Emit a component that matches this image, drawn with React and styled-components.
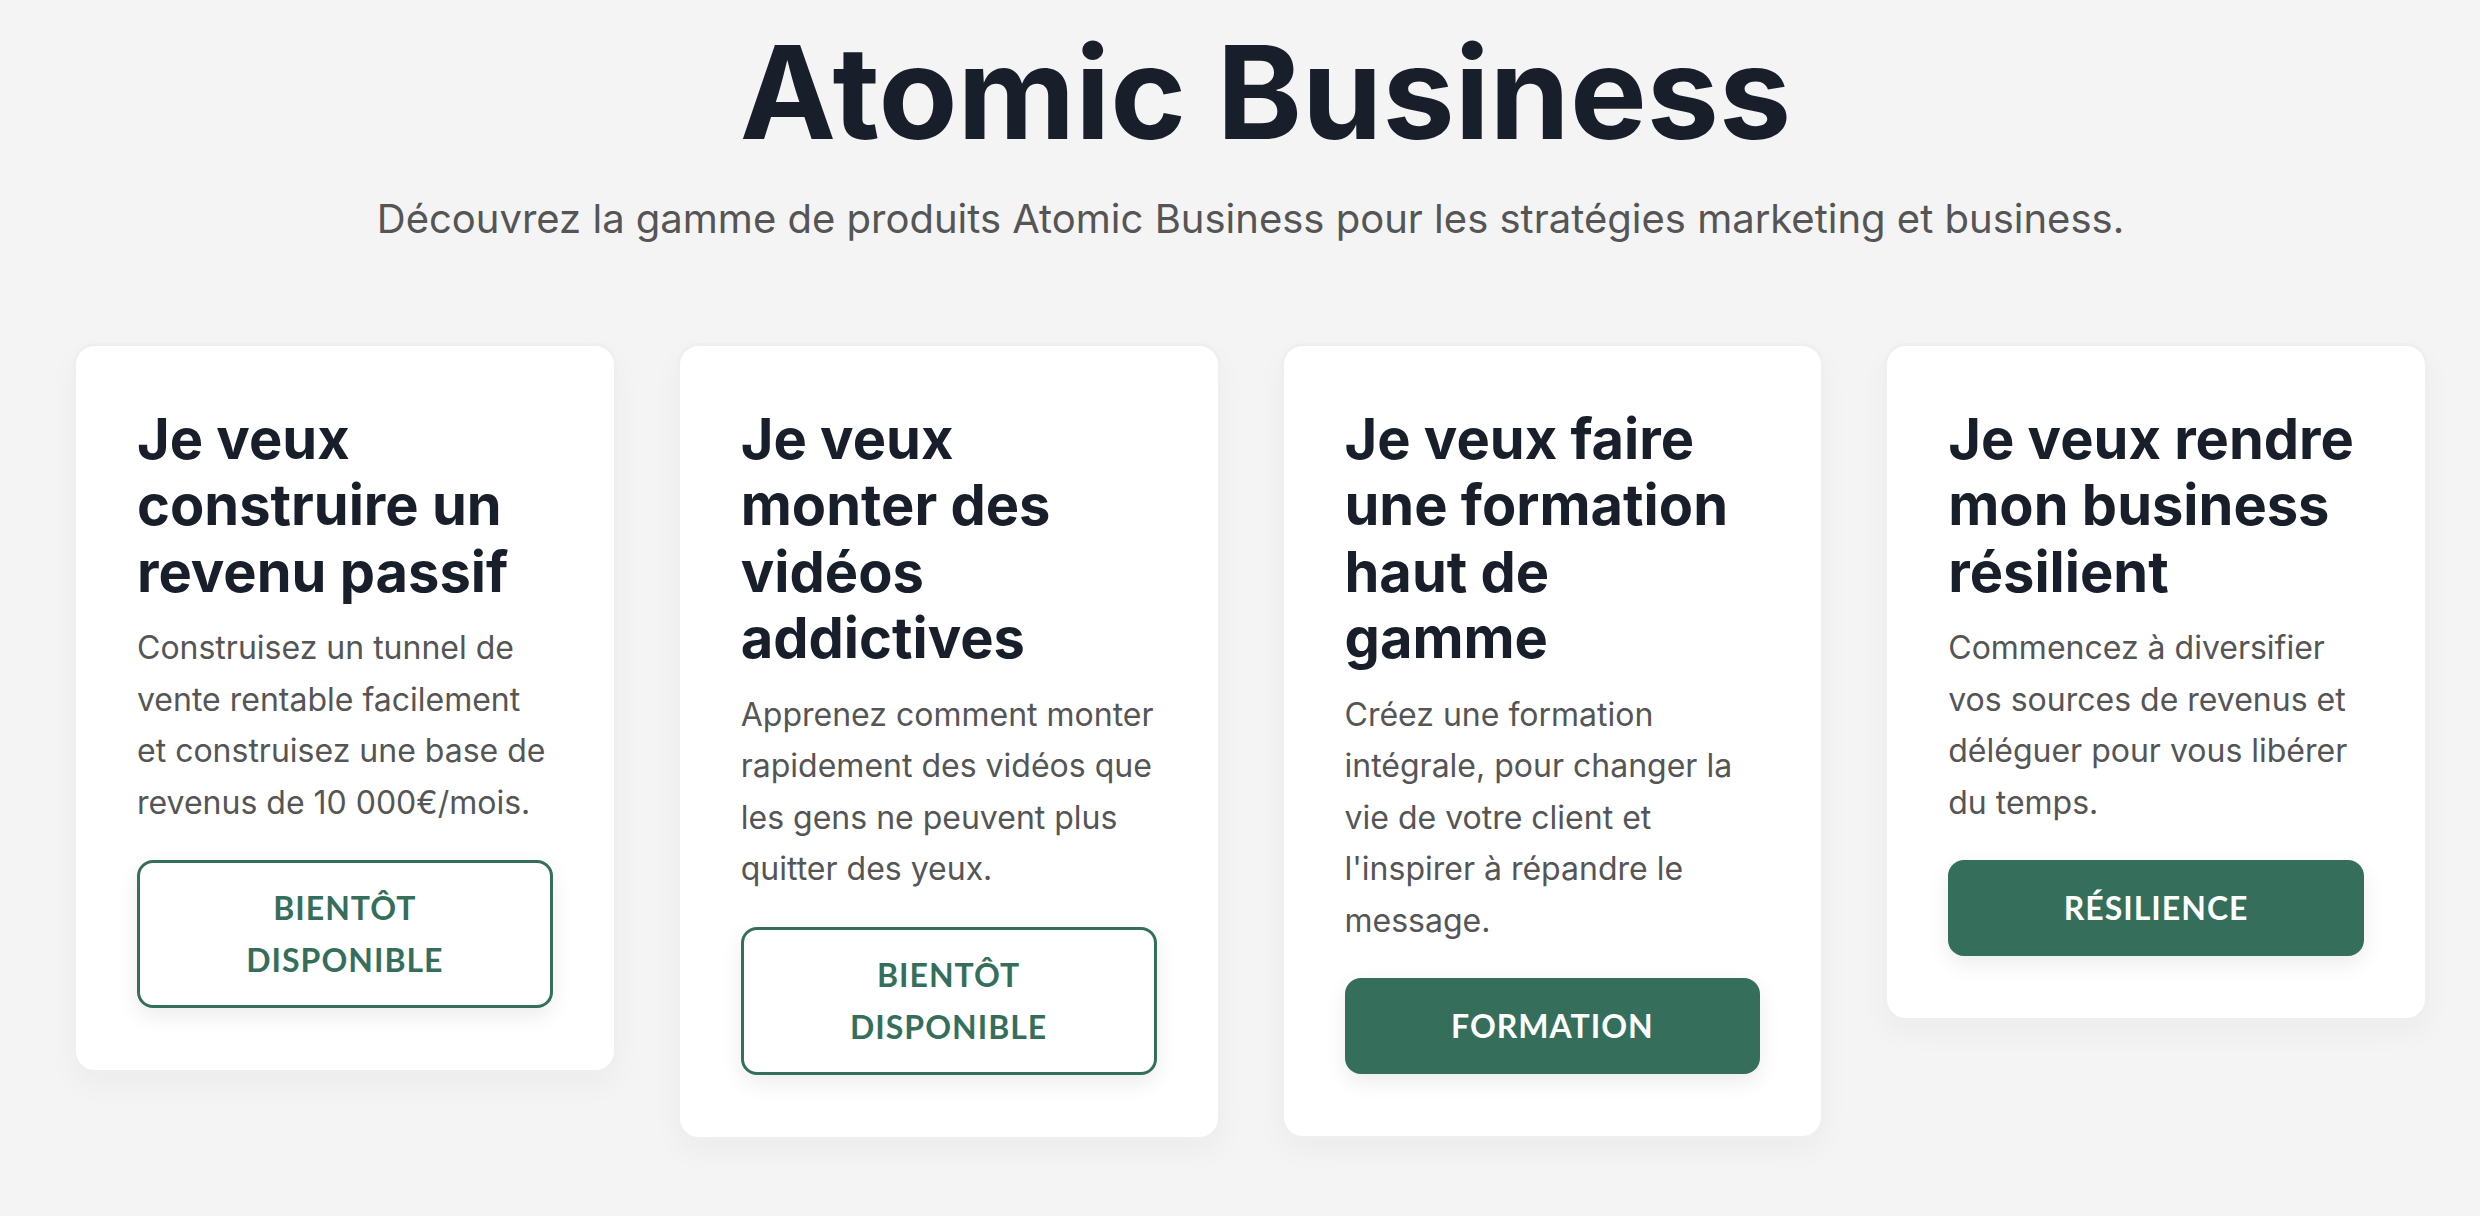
import React from 'react'
import styled, { createGlobalStyle } from 'styled-components'

const GlobalStyle = createGlobalStyle`
    html, body {
        margin: 0;
        padding: 0;
        background: #f4f4f4;
    }
    body {
        font-family: Inter, "Noto Sans", sans-serif;
    }
`

const Page = styled.main`
    padding: 16px 0 60px 21px;
`

const Header = styled.header`
    text-align: center;
`

const Title = styled.h1`
    margin: 0;
    padding-left: 30px;
    font-size: 129px;
    line-height: 152px;
    font-weight: 700;
    color: #181f2a;
`

const Subtitle = styled.p`
    margin: 22px 0 0;
    font-size: 40px;
    line-height: 57px;
    color: #555555;
`

const CardGrid = styled.section`
    display: grid;
    grid-template-columns: repeat(4, 1fr);
    gap: 60px;
    align-items: start;
    margin-top: 96px;
    padding: 0 52px;
`

const Card = styled.article`
    background: #ffffff;
    border: 3px solid #efefef;
    border-radius: 22px;
    padding: 60px 61px 62px;
    box-shadow: 0 12px 30px rgba(0, 0, 0, 0.035);
`

const CardTitle = styled.h2`
    margin: 0 0 17px;
    font-size: 56px;
    line-height: 66.4px;
    font-weight: 700;
    color: #181f2a;
`

const CardText = styled.p`
    margin: 0 0 32px;
    font-size: 32px;
    line-height: 51.5px;
    color: #555555;
`

const Button = styled.a`
    display: block;
    box-sizing: border-box;
    width: 100%;
    padding: 19px 40px;
    border: 3px solid #356f5b;
    border-radius: 16px;
    background: ${ props => props.$filled ? '#356f5b' : '#ffffff' };
    color: ${ props => props.$filled ? '#ffffff' : '#356f5b' };
    font-family: Lato, "Open Sans", sans-serif;
    font-weight: 700;
    font-size: 32px;
    line-height: 52px;
    letter-spacing: 1px;
    text-align: center;
    text-transform: uppercase;
    text-decoration: none;
    box-shadow: 0 8px 22px rgba(0, 0, 0, 0.08);
`

const products = [
    {
        title: 'Je veux construire un revenu passif',
        text: 'Construisez un tunnel de vente rentable facilement et construisez une base de revenus de 10 000€/mois.',
        cta: 'Bientôt disponible',
        filled: false,
    },
    {
        title: 'Je veux monter des vidéos addictives',
        text: 'Apprenez comment monter rapidement des vidéos que les gens ne peuvent plus quitter des yeux.',
        cta: 'Bientôt disponible',
        filled: false,
    },
    {
        title: 'Je veux faire une formation haut de gamme',
        text: "Créez une formation intégrale, pour changer la vie de votre client et l'inspirer à répandre le message.",
        cta: 'Formation',
        filled: true,
    },
    {
        title: 'Je veux rendre mon business résilient',
        text: 'Commencez à diversifier vos sources de revenus et déléguer pour vous libérer du temps.',
        cta: 'Résilience',
        filled: true,
    },
]

const ProductCard = ({ product }) => (
    <Card>
        <CardTitle>{ product.title }</CardTitle>
        <CardText>{ product.text }</CardText>
        <Button href="#" $filled={ product.filled }>{ product.cta }</Button>
    </Card>
)

export default function App() {
    return (
        <Page>
            <GlobalStyle />
            <Header>
                <Title>Atomic Business</Title>
                <Subtitle>Découvrez la gamme de produits Atomic Business pour les stratégies marketing et business.</Subtitle>
            </Header>
            <CardGrid>
                { products.map(product => <ProductCard key={ product.title } product={ product } />) }
            </CardGrid>
        </Page>
    )
}
